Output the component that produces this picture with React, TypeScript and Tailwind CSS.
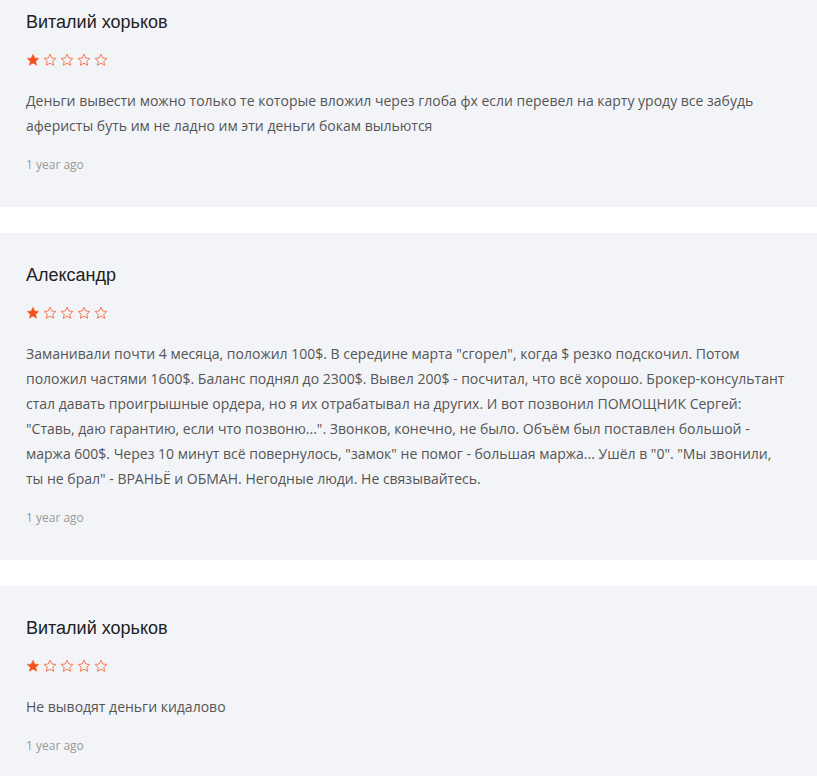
const reviews = [
  {
    name: "Виталий хорьков",
    text: "Деньги вывести можно только те которые вложил через глоба фх если перевел на карту уроду все забудь аферисты буть им не ладно им эти деньги бокам выльются",
  },
  {
    name: "Александр",
    text: 'Заманивали почти 4 месяца, положил 100$. В середине марта "сгорел", когда $ резко подскочил. Потом положил частями 1600$. Баланс поднял до 2300$. Вывел 200$ - посчитал, что всё хорошо. Брокер-консультант стал давать проигрышные ордера, но я их отрабатывал на других. И вот позвонил ПОМОЩНИК Сергей: "Ставь, даю гарантию, если что позвоню...". Звонков, конечно, не было. Объём был поставлен большой - маржа 600$. Через 10 минут всё повернулось, "замок" не помог - большая маржа... Ушёл в "0". "Мы звонили, ты не брал" - ВРАНЬЁ и ОБМАН. Негодные люди. Не связывайтесь.',
  },
  {
    name: "Виталий хорьков",
    text: "Не выводят деньги кидалово",
  },
];

function Star({ filled }: { filled: boolean }) {
  return (
    <svg width="14" height="14" viewBox="0 0 24 24">
      <path
        d="M12 2l3 6.6 7.1.7-5.4 4.8 1.6 7L12 17.4l-6.3 3.7 1.6-7L1.9 9.3 9 8.6z"
        fill={filled ? "#f4511e" : "none"}
        stroke="#f26a3d"
        strokeWidth={filled ? 1 : 1.5}
        strokeLinejoin="round"
      />
    </svg>
  );
}

function Review({ name, text }: { name: string; text: string }) {
  return (
    <div className="bg-[#f3f4f8] px-[26px] pt-[30px] pb-[32px]">
      <div className="text-[18px] leading-[24px] text-[#222] font-['Liberation_Sans',Arial,sans-serif]">
        {name}
      </div>
      <div className="flex gap-[3px] mt-[19px]">
        {[0, 1, 2, 3, 4].map((i) => (
          <Star key={i} filled={i === 0} />
        ))}
      </div>
      <p className="mt-[21px] text-[14px] leading-[25px] text-[#555]">{text}</p>
      <div className="mt-[17px] text-[12px] leading-[20px] text-[#999]">1 year ago</div>
    </div>
  );
}

export default function App() {
  return (
    <div className="w-[817px] h-[776px] overflow-hidden bg-white font-['Open_Sans',sans-serif]">
      <div className="-mt-[20px] flex flex-col gap-[26px]">
        {reviews.map((r, i) => (
          <Review key={i} name={r.name} text={r.text} />
        ))}
      </div>
    </div>
  );
}
